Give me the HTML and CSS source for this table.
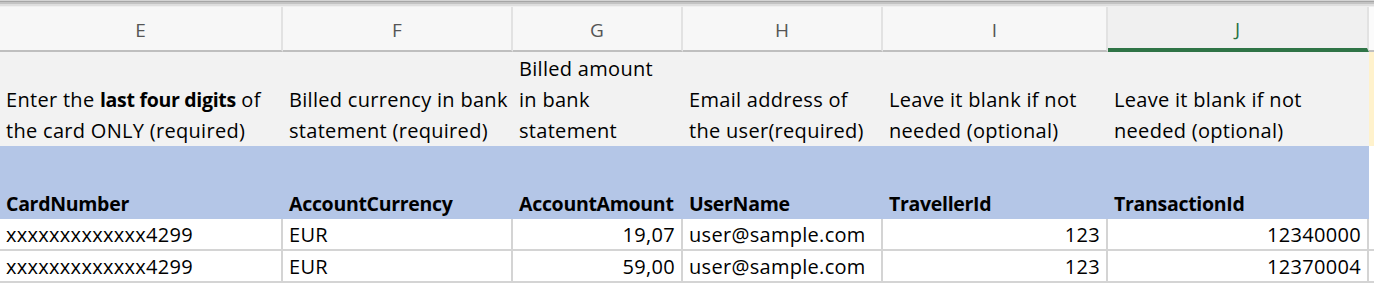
FILE: index.html
```html
<!DOCTYPE html>
<html lang="en">
<head>
<meta charset="utf-8">
<title>Sheet</title>
<link rel="stylesheet" href="styles.css">
</head>
<body>
<div class="topband"></div>
<div class="sheet">
  <div class="col-head">E</div>
  <div class="col-head">F</div>
  <div class="col-head">G</div>
  <div class="col-head">H</div>
  <div class="col-head">I</div>
  <div class="col-head sel">J</div>
  <div class="col-head last"></div>

  <div class="desc"><span>Enter the <b>last four digits</b> of<br>the card ONLY (required)</span></div>
  <div class="desc"><span>Billed currency in bank<br>statement (required)</span></div>
  <div class="desc"><span>Billed amount<br>in bank<br>statement</span></div>
  <div class="desc"><span>Email address of<br>the user(required)</span></div>
  <div class="desc"><span>Leave it blank if not<br>needed (optional)</span></div>
  <div class="desc"><span>Leave it blank if not<br>needed (optional)</span></div>
  <div class="desc extra"></div>

  <div class="field">CardNumber</div>
  <div class="field">AccountCurrency</div>
  <div class="field">AccountAmount</div>
  <div class="field">UserName</div>
  <div class="field">TravellerId</div>
  <div class="field">TransactionId</div>
  <div class="field blank"></div>

  <div class="cell">xxxxxxxxxxxxx4299</div>
  <div class="cell">EUR</div>
  <div class="cell num">19,07</div>
  <div class="cell">user@sample.com</div>
  <div class="cell num">123</div>
  <div class="cell num">12340000</div>
  <div class="cell blank"></div>

  <div class="cell">xxxxxxxxxxxxx4299</div>
  <div class="cell">EUR</div>
  <div class="cell num">59,00</div>
  <div class="cell">user@sample.com</div>
  <div class="cell num">123</div>
  <div class="cell num">12370004</div>
  <div class="cell blank"></div>
</div>
</body>
</html>
```
FILE: styles.css
```css
html, body {
  margin: 0;
  padding: 0;
  background: #ffffff;
}
body {
  font-family: "Open Sans", Lato, sans-serif;
  font-size: 20px;
  letter-spacing: 0.3px;
  color: #000;
  width: 1374px;
  height: 284px;
  overflow: hidden;
}
.topband {
  height: 7px;
  background: linear-gradient(to bottom,
    #d4d4d4 0, #d4d4d4 1px,
    #a6a6a6 1px, #a6a6a6 2px,
    #c3c3c3 2px, #c3c3c3 4px,
    #dedede 4px, #dedede 6px,
    #efefef 6px, #efefef 7px);
}
.sheet {
  display: grid;
  grid-template-columns: 283px 230px 170px 200px 225px 261px 1fr;
  grid-template-rows: 45px 94px 73px 32px 32px;
}
.col-head {
  background: #f7f7f7;
  border-bottom: 2px solid #bfbfbf;
  border-right: 2px solid #e2e2e2;
  color: #555555;
  display: flex;
  align-items: center;
  justify-content: center;
  font-size: 19px;
  letter-spacing: 0;
  padding-top: 2px;
}
.col-head.sel {
  color: #2a7245;
  background: #f0f0f0;
  border-bottom: 4px solid #2f7446;
}
.col-head.last {
  background: #fbfbfb;
  border-right: 0;
}
.desc {
  background: #f2f2f2;
  line-height: 31px;
  padding: 0 0 0 6px;
  display: flex;
  align-items: flex-end;
  white-space: nowrap;
}
.desc b, .field {
  font-weight: 700;
  font-size: 19.5px;
  letter-spacing: -0.3px;
}
.desc.extra {
  background: #fff2cc;
}
.field {
  background: #b4c6e7;
  display: flex;
  align-items: flex-end;
  padding: 0 0 2px 6px;
  white-space: nowrap;
}
.field.blank {
  background: #ffffff;
}
.cell {
  border-right: 2px solid #d4d4d4;
  border-bottom: 2px solid #d4d4d4;
  display: flex;
  align-items: center;
  padding: 0 0 0 6px;
  white-space: nowrap;
}
.cell.num {
  justify-content: flex-end;
  padding: 0 6px 0 0;
}
.cell.blank {
  border-right: 0;
}
```
